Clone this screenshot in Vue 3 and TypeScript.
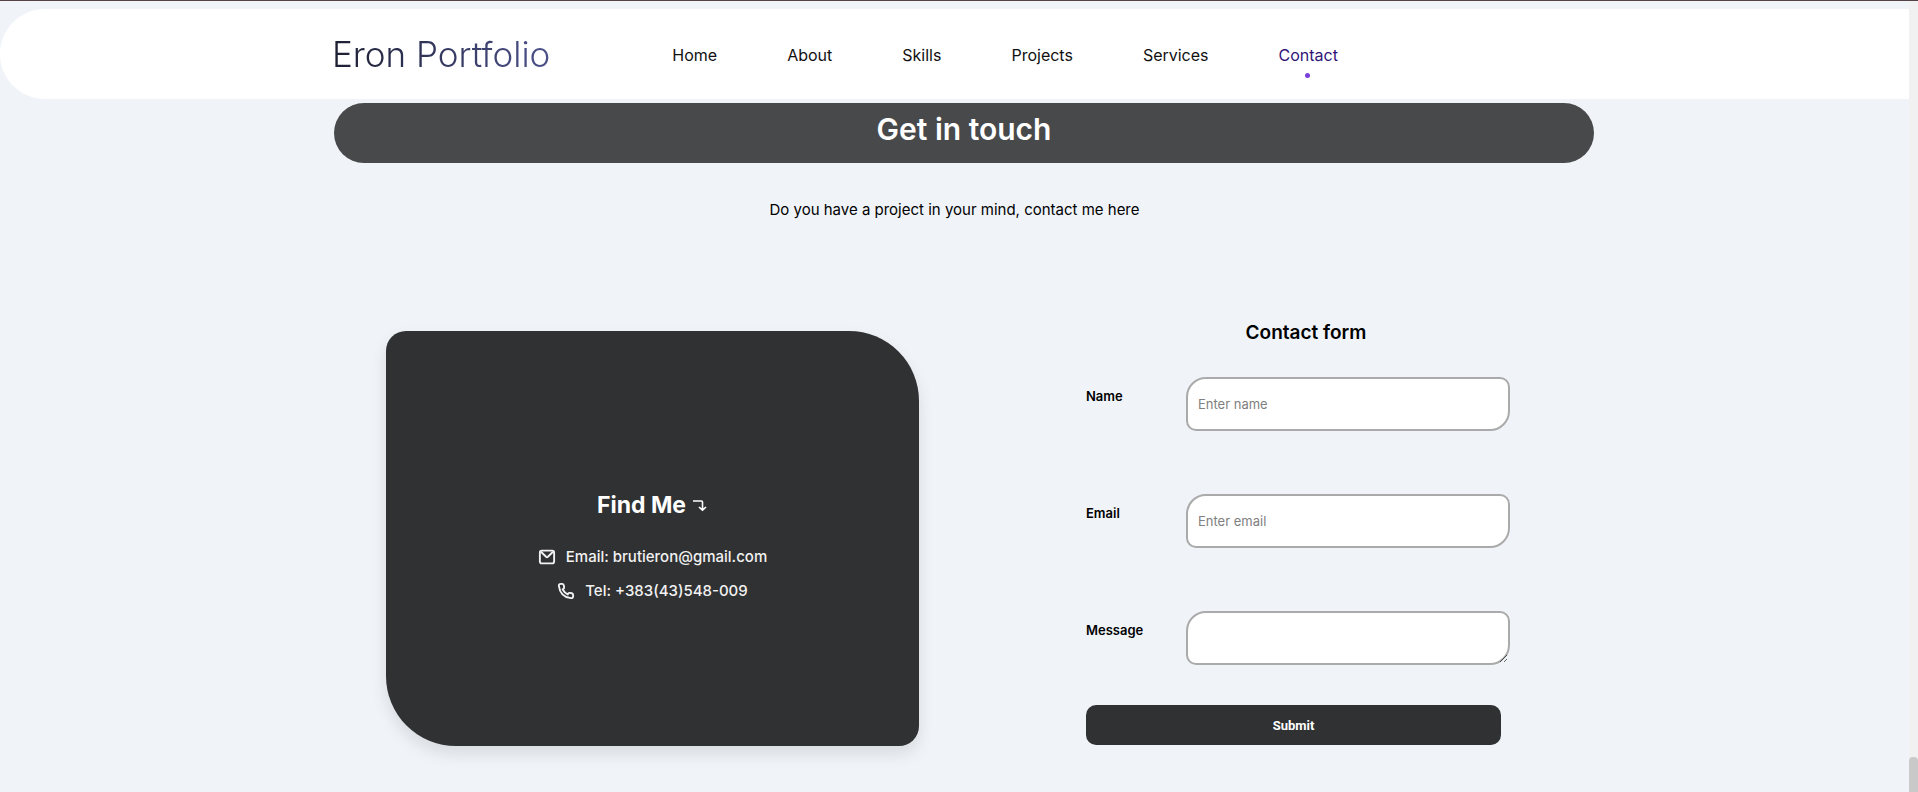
<script setup lang="ts">
import { ref } from 'vue'

interface NavItem {
  label: string
  href: string
}

const navItems: NavItem[] = [
  { label: 'Home', href: '#home' },
  { label: 'About', href: '#about' },
  { label: 'Skills', href: '#skills' },
  { label: 'Projects', href: '#projects' },
  { label: 'Services', href: '#services' },
  { label: 'Contact', href: '#contact' },
]

const active = ref('Contact')
const name = ref('')
const email = ref('')
const message = ref('')
</script>

<template>
  <div class="page">
    <header class="header">
      <a class="logo" href="#home">Eron Portfolio</a>
      <nav class="nav">
        <a
          v-for="item in navItems"
          :key="item.label"
          :href="item.href"
          class="nav-link"
          :class="{ active: item.label === active }"
          @click="active = item.label"
        >{{ item.label }}</a>
      </nav>
    </header>

    <main id="contact" class="contact">
      <h1 class="title">Get in touch</h1>
      <p class="lead">Do you have a project in your mind, contact me here</p>

      <div class="columns">
        <section class="card">
          <h2 class="card-title">
            Find Me
            <svg class="arrow" viewBox="0 0 16 16" aria-hidden="true">
              <path d="M1 4H9.500Q10.500 4 10.500 5V13M7 10L10.500 13.200L14 10" />
            </svg>
          </h2>
          <p class="card-line">
            <svg class="icon" viewBox="0 0 24 24" aria-hidden="true">
              <rect x="2.500" y="3.500" width="19" height="17" rx="2.500" />
              <path d="M4 5L10.800 11.700Q12 12.800 13.200 11.700L20 5" />
            </svg>
            Email: brutieron@gmail.com
          </p>
          <p class="card-line">
            <svg class="icon" viewBox="0 0 24 24" aria-hidden="true">
              <path d="M5 2.500H6.800Q8.600 2.500 9 4.200L9.500 7Q9.700 8.300 8.600 9L7.400 9.700Q9.800 14.200 14.300 16.600L15 15.400Q15.700 14.300 17 14.500L19.800 15Q21.500 15.400 21.500 17.200V19Q21.500 21.800 18.600 21.500Q4.500 20 2.500 5.400Q2.300 2.500 5 2.500Z" />
            </svg>
            Tel: +383(43)548-009
          </p>
        </section>

        <form class="form" @submit.prevent>
          <h2 class="form-title">Contact form</h2>
          <div class="field">
            <label for="name">Name</label>
            <input id="name" v-model="name" type="text" placeholder="Enter name" />
          </div>
          <div class="field">
            <label for="email">Email</label>
            <input id="email" v-model="email" type="email" placeholder="Enter email" />
          </div>
          <div class="field">
            <label for="message">Message</label>
            <textarea id="message" v-model="message"></textarea>
          </div>
          <button class="submit" type="submit">Submit</button>
        </form>
      </div>
    </main>

    <div class="scroll-track" aria-hidden="true">
      <div class="scroll-thumb"></div>
    </div>
  </div>
</template>

<style>
body {
  background: #f0f4f9;
}
</style>

<style scoped>
.page {
  box-sizing: border-box;
  min-height: 100vh;
  padding: 8px 9px 0 0;
  border-top: 1px solid #554246;
  background: #f0f4f9;
  color: #000;
  font-family: Inter, "Open Sans", sans-serif;
}

.header {
  display: flex;
  align-items: center;
  box-sizing: border-box;
  height: 90px;
  padding-left: 332px;
  gap: 122px;
  border-radius: 45px 0 0 45px;
  background: #fff;
}

.logo {
  background: linear-gradient(to right, #1d2033, #4b508a);
  background-clip: text;
  color: transparent;
  font-size: 35px;
  font-weight: 300;
  text-decoration: none;
  white-space: nowrap;
}

.nav {
  display: flex;
  gap: 70px;
  padding-top: 2px;
}

.nav-link {
  position: relative;
  color: #111;
  font-size: 16px;
  line-height: 24px;
  text-decoration: none;
}

.nav-link.active {
  color: #2f1578;
}

.nav-link.active::after {
  position: absolute;
  bottom: -11px;
  left: calc(50% - 3px);
  width: 5px;
  height: 5px;
  border-radius: 50%;
  background: #7a3fdc;
  content: "";
}

.contact {
  padding-top: 4px;
}

.title {
  box-sizing: border-box;
  height: 60px;
  margin: 0 315px 0 334px;
  padding-top: 8px;
  border-radius: 30px;
  background: #48494b;
  color: #fff;
  font-size: 30px;
  font-weight: 600;
  line-height: 36px;
  text-align: center;
}

.lead {
  margin: 35px 0 0;
  font-size: 15px;
  font-weight: 400;
  line-height: 24px;
  text-align: center;
}

.columns {
  display: flex;
  align-items: flex-start;
  justify-content: space-between;
  padding: 97px 399px 0 386px;
}

.card {
  display: flex;
  flex-direction: column;
  align-items: center;
  justify-content: center;
  box-sizing: border-box;
  width: 533px;
  height: 415px;
  margin-top: 12px;
  padding-top: 24px;
  border-radius: 20px 70px;
  background: #303133;
  box-shadow: 0 8px 16px rgba(0, 0, 0, 0.1);
  color: #f2f2f2;
}

.card-title {
  display: flex;
  align-items: center;
  gap: 6px;
  margin: 0 0 24px;
  color: #fff;
  font-size: 23px;
  font-weight: 700;
  line-height: 32px;
}

.arrow {
  width: 16px;
  height: 16px;
  fill: none;
  stroke: currentColor;
  stroke-width: 1.600;
}

.card-line {
  display: flex;
  align-items: center;
  gap: 10px;
  margin: 0 0 10px;
  font-size: 15px;
  font-weight: 500;
  line-height: 24px;
}

.icon {
  width: 18px;
  height: 18px;
  fill: none;
  stroke: currentColor;
  stroke-width: 2.500;
  stroke-linejoin: round;
}

.form {
  width: 424px;
}

.form-title {
  margin: 0 0 30px;
  padding-left: 16px;
  font-size: 19px;
  font-weight: 600;
  line-height: 28px;
  text-align: center;
}

.field {
  display: grid;
  grid-template-columns: 100px 1fr;
  align-items: start;
  margin-bottom: 63px;
}

.field:last-of-type {
  margin-bottom: 40px;
}

.field label {
  padding-top: 10px;
  font-size: 13px;
  font-weight: 600;
  line-height: 18px;
}

.field input,
.field textarea {
  box-sizing: border-box;
  width: 100%;
  height: 54px;
  padding: 10px;
  border: 2px solid #aaa;
  border-radius: 20px 10px;
  background: #fff;
  font-family: inherit;
  font-size: 13px;
  font-weight: 400;
}

.field input::placeholder {
  color: #808080;
}

.submit {
  display: block;
  width: 415px;
  height: 40px;
  border: 0;
  border-radius: 10px;
  background: #303133;
  color: #fff;
  font-family: Roboto, Arial, sans-serif;
  font-size: 13px;
  font-weight: 700;
}

.scroll-track {
  position: fixed;
  top: 1px;
  right: 0;
  bottom: 0;
  display: flex;
  align-items: flex-end;
  width: 9px;
  background: #f1f1f1;
}

.scroll-thumb {
  width: 100%;
  height: 35px;
  border-radius: 4px 4px 0 0;
  background: #c9c9c9;
}
</style>
